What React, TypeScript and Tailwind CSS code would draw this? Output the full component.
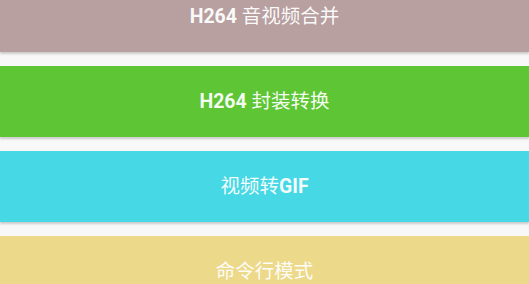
const items = [
  { latin: "H264", cjk: " 音视频合并", bg: "bg-[#b7a09f]", latinFirst: true },
  { latin: "H264", cjk: " 封装转换", bg: "bg-[#5ec634]", latinFirst: true },
  { latin: "GIF", cjk: "视频转", bg: "bg-[#46d8e4]", latinFirst: false },
  { latin: "", cjk: "命令行模式", bg: "bg-[#ecd98a]", latinFirst: false },
];

const App = () => {
  return (
    <div className="h-[284px] overflow-hidden bg-[#f8f8f8] font-['Roboto','Noto_Sans_CJK_SC',sans-serif]">
      <div className="-mt-[19px] flex flex-col gap-[14px]">
        {items.map((item, index) => (
          <div
            key={index}
            className={`${item.bg} h-[71px] flex items-center justify-center text-[19.5px] text-white/95 shadow-[0_2px_2px_rgba(0,0,0,0.18)]`}
          >
            {item.latinFirst ? (
              <p>
                <span className="font-bold">{item.latin}</span>
                {item.cjk}
              </p>
            ) : (
              <p>
                {item.cjk}
                <span className="font-bold">{item.latin}</span>
              </p>
            )}
          </div>
        ))}
      </div>
    </div>
  );
};

export default App;
